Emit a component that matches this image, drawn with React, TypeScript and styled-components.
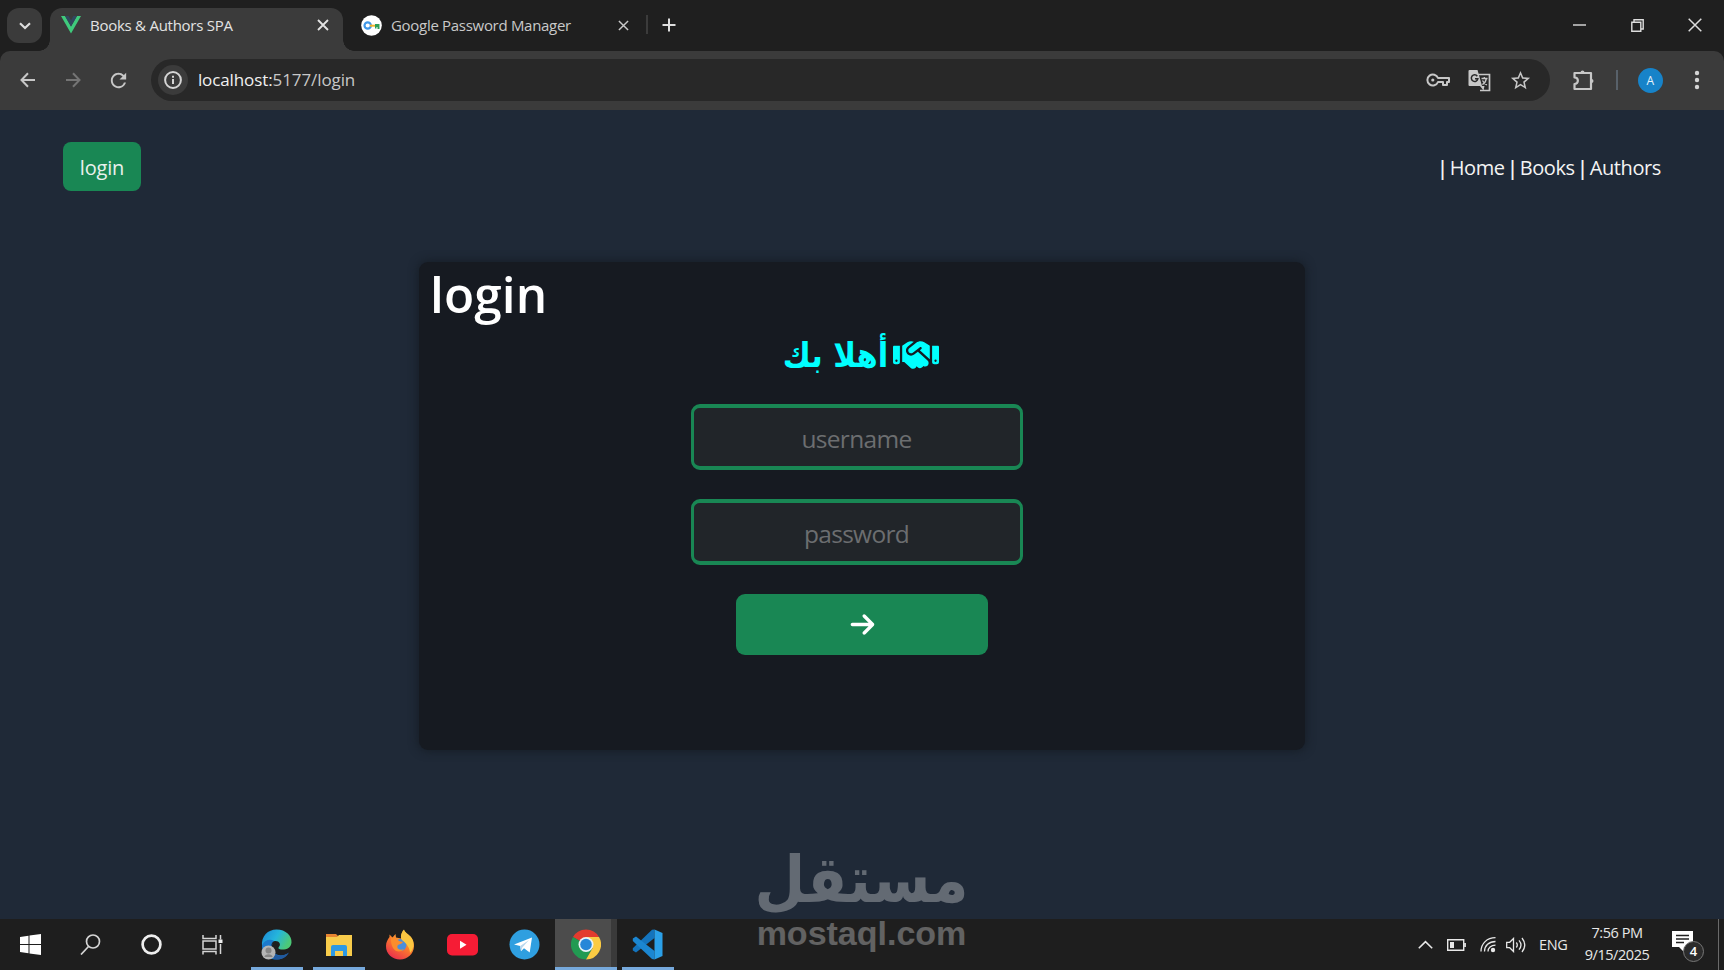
import React from 'react';
import styled, { createGlobalStyle } from 'styled-components';
import { FaArrowRight, FaHandshake } from 'react-icons/fa6';
import { MdStarBorder, MdRefresh } from 'react-icons/md';

const Global = createGlobalStyle`
  * { box-sizing: border-box; }
  body { margin: 0; background: #1f2937; font-family: "Open Sans", "Noto Sans", sans-serif; overflow: hidden; }
  svg { display: block; flex: none; }
`;

const Screen = styled.div`
  width: 1724px;
  height: 970px;
  display: flex;
  flex-direction: column;
  position: relative;
  overflow: hidden;
`;

/* ---------- Browser chrome ---------- */
const TabStrip = styled.div`
  height: 51px;
  flex: none;
  background: #1f1f1f;
  display: flex;
  align-items: flex-start;
  padding: 8px 0 0 7px;
`;
const TabSearch = styled.div`
  width: 35px;
  height: 35px;
  border-radius: 12px;
  background: #3b3b3b;
  display: grid;
  place-items: center;
`;
const Tab = styled.div<{ $active?: boolean; $width: number; $left: number }>`
  position: relative;
  width: ${p => p.$width}px;
  height: ${p => (p.$active ? 43 : 35)}px;
  margin-left: ${p => p.$left}px;
  padding: 0 ${p => (p.$active ? 14 : 6)}px ${p => (p.$active ? 9 : 1)}px 11px;
  display: flex;
  align-items: center;
  color: ${p => (p.$active ? '#e3e3e3' : '#c9c9c9')};
  background: ${p => (p.$active ? '#3b3b3b' : 'transparent')};
  border-radius: 12px 12px 0 0;
`;
const TabFlare = styled.span<{ $right?: boolean }>`
  position: absolute;
  bottom: 0;
  ${p => (p.$right ? 'right: -11px;' : 'left: -11px;')}
  width: 11px;
  height: 11px;
  background: radial-gradient(circle at ${p => (p.$right ? '100% 0' : '0 0')}, transparent 10.5px, #3b3b3b 11px);
`;
const TabTitle = styled.span<{ $spacing: number }>`
  flex: 1;
  margin-left: 9px;
  font-size: 15px;
  line-height: 20px;
  letter-spacing: ${p => p.$spacing}px;
  white-space: nowrap;
`;
const TabDivider = styled.div`
  width: 2px;
  height: 19px;
  margin: 7px 14px 0 11px;
  background: #3b3b3b;
`;
const NewTab = styled.div`
  margin-top: 10px;
`;
const WindowControls = styled.div`
  margin-left: auto;
  margin-top: -8px;
  height: 50px;
  display: flex;
`;
const WindowButton = styled.div`
  width: 58px;
  display: grid;
  place-items: center;
`;
const Toolbar = styled.div`
  height: 59px;
  flex: none;
  background: linear-gradient(#1f1f1f, #1f1f1f) top / 100% 12px no-repeat;
`;
const ToolbarInner = styled.div`
  height: 100%;
  background: #3b3b3b;
  border-radius: 10px 10px 0 0;
  display: flex;
  align-items: center;
  padding: 0 15px 1px 5px;
  color: #c7c7c7;
`;
const NavButton = styled.div<{ $dim?: boolean }>`
  width: 45.3px;
  display: grid;
  place-items: center;
  color: ${p => (p.$dim ? '#747474' : '#c7c7c7')};
`;
const AddressBar = styled.div`
  width: 1399px;
  height: 42px;
  margin-left: 10px;
  border-radius: 21px;
  background: #282828;
  display: flex;
  align-items: center;
  padding: 0 18px 0 7px;
`;
const SiteInfo = styled.div`
  width: 30px;
  height: 30px;
  border-radius: 50%;
  background: #3b3b3b;
  display: grid;
  place-items: center;
`;
const Url = styled.div`
  flex: 1;
  margin-left: 10px;
  font-size: 17px;
  line-height: 24px;
  letter-spacing: -0.1px;
  color: #c7c7c7;
  b { font-weight: 500; color: #f1f1f1; }
`;
const AddressActions = styled.div`
  display: flex;
  align-items: center;
  gap: 18px;
`;
const ToolbarActions = styled.div`
  flex: 1;
  display: flex;
  align-items: center;
  padding-left: 23px;
`;
const ToolbarDivider = styled.div`
  width: 2px;
  height: 20px;
  margin: 0 20px 0 22px;
  background: #58616a;
`;
const Avatar = styled.div`
  width: 25px;
  height: 25px;
  border-radius: 50%;
  background: #1783c9;
  color: #e6f3fb;
  font-size: 12px;
  line-height: 25px;
  text-align: center;
  margin-right: 31px;
`;

/* ---------- Page ---------- */
const Page = styled.main`
  height: 809px;
  flex: none;
  background: #1f2937;
  display: flex;
  flex-direction: column;
`;
const SiteNav = styled.nav`
  height: 152px;
  display: flex;
  align-items: flex-start;
  justify-content: space-between;
  padding: 32px 63px 0;
`;
const LoginLink = styled.a`
  width: 78px;
  height: 49px;
  border-radius: 8px;
  background: #198754;
  color: #e9f1ed;
  font-size: 20px;
  line-height: 51px;
  letter-spacing: -0.2px;
  text-align: center;
`;
const NavLinks = styled.div`
  font-size: 20px;
  line-height: 52px;
  letter-spacing: -0.4px;
  word-spacing: -2.6px;
  color: #f4f4f4;
  white-space: nowrap;
  b { font-weight: 600; }
`;
const Card = styled.section`
  width: 886px;
  height: 488px;
  margin-left: 419px;
  border-radius: 9px;
  background: #161a21;
  box-shadow: 0 0 10px 1px rgba(20, 26, 34, 0.8);
  display: flex;
  flex-direction: column;
  align-items: center;
`;
const CardTitle = styled.h1`
  align-self: flex-start;
  margin: -1px 0 0 11px;
  height: 69px;
  font-size: 49.5px;
  line-height: 67px;
  font-weight: 600;
  letter-spacing: 0.1px;
  color: #fff;
`;
const Welcome = styled.div`
  height: 50px;
  display: flex;
  align-items: center;
  gap: 5px;
  margin-right: 2px;
  color: #00ffff;
  font-family: "DejaVu Sans Condensed", "DejaVu Sans", sans-serif;
  font-stretch: semi-condensed;
  font-weight: 700;
  font-size: 34px;
  line-height: 50px;
  white-space: nowrap;
`;
const Field = styled.input`
  width: 332px;
  height: 66px;
  margin: 0 10px 29px 0;
  border: solid #198754;
  border-width: 4px 3px;
  border-radius: 9px;
  background: #212529;
  padding: 2px 0 0;
  text-align: center;
  font-family: "Open Sans", "Noto Sans", sans-serif;
  font-size: 24.5px;
  letter-spacing: -0.7px;
  outline: none;
  &::placeholder { color: #6c6e70; opacity: 1; }
`;
const Form = styled.form`
  margin: 24px 1px 0 0;
  display: flex;
  flex-direction: column;
  align-items: center;
`;
const Submit = styled.button`
  width: 252px;
  height: 61px;
  border: 0;
  border-radius: 9px;
  background: #198754;
  color: #fff;
  display: grid;
  place-items: center;
  padding: 0 0 0 1px;
`;

/* ---------- Watermark ---------- */
const Watermark = styled.div`
  position: absolute;
  left: 758px;
  top: 845px;
  width: 207px;
  height: 120px;
  opacity: 0.3;
  color: #fff;
  display: flex;
  flex-direction: column;
  align-items: center;
`;
const WatermarkArabic = styled.div`
  height: 70px;
  font: 700 65px/70px "DejaVu Sans Condensed", "DejaVu Sans", sans-serif;
  font-stretch: semi-condensed;
  white-space: nowrap;
`;
const WatermarkLatin = styled.div`
  font: 700 34px/36px "Liberation Sans", sans-serif;
  white-space: nowrap;
`;

/* ---------- Taskbar ---------- */
const Taskbar = styled.footer`
  height: 51px;
  flex: none;
  background: #1e1e1e;
  display: flex;
`;
const SystemSlot = styled.div`
  width: 60.6px;
  display: grid;
  place-items: center;
`;
const AppSlots = styled.div`
  display: flex;
  margin-left: 3.6px;
`;
const AppSlot = styled.div<{ $active?: boolean; $running?: boolean }>`
  position: relative;
  width: 61.8px;
  display: grid;
  place-items: center;
  background: ${p => (p.$active ? 'linear-gradient(90deg, #4c4c4c 56px, #3a3a3a 56px)' : 'none')};
  &::after {
    content: '';
    display: ${p => (p.$running ? 'block' : 'none')};
    position: absolute;
    bottom: 0;
    left: ${p => (p.$active ? 0 : 5)}px;
    right: ${p => (p.$active ? 0 : 5)}px;
    height: 3px;
    background: #76a9dc;
  }
`;
const Tray = styled.div`
  margin-left: auto;
  display: flex;
  align-items: center;
  color: #e8e8e8;
`;
const TrayIcon = styled.div<{ $gap: number }>`
  margin-right: ${p => p.$gap}px;
`;
const Language = styled.div`
  width: 29px;
  font-size: 14.5px;
  letter-spacing: -0.3px;
  margin-right: 12px;
`;
const Clock = styled.div`
  width: 74px;
  font-size: 14.5px;
  line-height: 22px;
  letter-spacing: -0.45px;
  text-align: center;
  white-space: nowrap;
  margin-right: 18px;
  padding-bottom: 1px;
`;
const Notifications = styled.div`
  position: relative;
  width: 32px;
  height: 31px;
  margin: 3px 14px 0 0;
`;
const Badge = styled.span`
  position: absolute;
  right: 0;
  bottom: 0;
  width: 21px;
  height: 21px;
  border-radius: 50%;
  border: 1.5px solid #777;
  background: #2b2b2b;
  color: #fff;
  font-size: 13px;
  font-weight: 600;
  line-height: 18px;
  text-align: center;
`;
const ShowDesktop = styled.div`
  width: 6px;
  height: 51px;
  border-left: 1px solid #6a6a6a;
`;

const Cross = ({ size, weight = 1.8 }: { size: number; weight?: number }) => (
  <svg width={size} height={size} viewBox="0 0 12 12" fill="none" stroke="currentColor" strokeWidth={weight}>
    <path d="M1 1l10 10M11 1L1 11" />
  </svg>
);

const BackArrow = ({ flip }: { flip?: boolean }) => (
  <svg width="16" height="16" viewBox="0 0 16 16" fill="none" stroke="currentColor" strokeWidth="2">
    <path d={flip ? 'M1 8h13M8 1.3L14.5 8 8 14.7' : 'M15 8H2M8 1.3L1.5 8 8 14.7'} />
  </svg>
);

const VueLogo = () => (
  <svg width="20" height="18" viewBox="0 0 20 18">
    <path d="M0 0h4l6 10.5L16 0h4L10 17.5z" fill="#3fca7c" />
    <path d="M4 0h3.6L10 4.2 12.4 0H16l-6 10.5z" fill="#31475e" />
  </svg>
);

const PasswordLogo = () => (
  <svg width="21" height="21" viewBox="0 0 21 21">
    <circle cx="10.5" cy="10.5" r="10.3" fill="#fff" />
    <circle cx="6.7" cy="10.5" r="3.2" fill="none" stroke="#3f97e8" strokeWidth="2.2" />
    <path d="M9 9.7h6v2H9z" fill="#f3b32b" />
    <path d="M14 9h4.5v5h-2v-2h-1v1.6H14z" fill="#2f9e57" />
  </svg>
);

const KeyIcon = () => (
  <svg width="24" height="14" viewBox="0 0 24 14" fill="none" stroke="currentColor" strokeWidth="2">
    <path d="M12 5h11v4h-2v3h-4V9h-5a5.500 5.500 0 1 1 0-4z" strokeLinejoin="round" />
    <circle cx="6.800" cy="7" r="1.600" fill="currentColor" stroke="none" />
  </svg>
);

const TranslateIcon = () => (
  <svg width="23" height="23" viewBox="0 0 23 23" fill="none">
    <path d="M10 5.500h11.500v16H12" stroke="currentColor" strokeWidth="1.700" />
    <path d="M1.500 1h8l4.500 16H1.500Q.5 17 .5 16V2q0-1 1-1z" fill="currentColor" />
    <path d="M9.300 7.200a3.300 3.300 0 1 0 .6 2.500H7" stroke="#282828" strokeWidth="1.500" />
    <path d="M12 17l3.500 4.500 1-4.500z" fill="currentColor" />
    <path d="M13.500 9.500h6M16.300 8v1.500M18.300 10q-1 4-4 5.500M14.500 11.500q1.500 3 4.500 4.500" stroke="currentColor" strokeWidth="1.300" />
  </svg>
);

const PuzzleIcon = () => (
  <svg width="21" height="21" viewBox="0 0 21 21" fill="none" stroke="currentColor" strokeWidth="2.200" strokeLinejoin="round">
    <path d="M1.500 3H18v16H1.500v-5c4.500 0 4.500-6.500 0-6.500z" />
    <path d="M7.500 2.500a2 2 0 0 1 4 0zM18.500 9v4a2 2 0 0 0 0-4z" fill="currentColor" stroke="none" />
  </svg>
);

const EdgeLogo = () => (
  <svg width="31" height="31" viewBox="0 0 31 31">
    <defs>
      <linearGradient id="edgeTop" x1="0" x2="1" y1="0" y2=".4">
        <stop offset="0" stopColor="#1c86d6" />
        <stop offset=".55" stopColor="#25b6dc" />
        <stop offset="1" stopColor="#4cc977" />
      </linearGradient>
    </defs>
    <path d="M1 17C0 7 7 .5 15.5.5 25 .5 31 7 30.5 13.5 30 19 25 21 20 20.5c-3-.4-3-1.600-1.800-3 1.800-2 .3-5.500-3.700-5.500C7 12 1 17 1 17z" fill="url(#edgeTop)" />
    <path d="M1 16.500C3 11 9 9.500 13 12c-3 2-3.500 6-1.500 9.500 2.500 5 9 6.500 15.500 3C23 30 17 31.500 11.500 30 5 28.500.5 22 1 16.500z" fill="#1b79cc" />
    <path d="M12 14c-2.500 4-1 10 4 12 4 1.500 8 0 12-2.500C25 29 19 31.500 13.500 30 9 28 7.500 19 12 14z" fill="#215a9f" />
    <circle cx="7.500" cy="23.500" r="7" fill="#b5b5b5" />
    <circle cx="7.500" cy="21.500" r="3" fill="#858585" />
    <path d="M3.300 28a4.300 3.500 0 0 1 8.400 0z" fill="#858585" />
  </svg>
);

const FolderLogo = () => (
  <svg width="28" height="24" viewBox="0 0 28 24">
    <path d="M1 1h10l2 2v5H1z" fill="#e78532" />
    <path d="M1 4h11l2-2h13v21H1z" fill="#f8cc4b" />
    <path d="M6 23V14q0-2 2-2h12q2 0 2 2v9h-4v-5h-8v5z" fill="#2d99e4" />
  </svg>
);

const FirefoxLogo = () => (
  <svg width="30" height="31" viewBox="0 0 30 31">
    <defs>
      <linearGradient id="fox" x1=".8" x2=".2" y1="0" y2="1">
        <stop offset="0" stopColor="#ffd848" />
        <stop offset=".5" stopColor="#fb7b2c" />
        <stop offset="1" stopColor="#e82850" />
      </linearGradient>
    </defs>
    <path d="M19 .5c1 4 7 5 9 11 1 2 1 5 1 6C28.500 25 22.500 30.500 15 30.500S.8 25 1 17c0-4 1.500-6 3.500-9V5.500l3 3 3-3.500.5 3.500 5 1C16 5 17 2 19 .5z" fill="url(#fox)" />
    <circle cx="15.500" cy="16" r="6" fill="#4b8edc" />
    <path d="M6 9c3-1 6 0 8 3l4 1c-1 2-4 2-5 3-2 3 1 6 6 4-2 3-8 4-11-1-2-3-2-7-2-10z" fill="#fb8d2d" />
    <path d="M19 1c1 4 7 5 9 11 1 5 0 9-3 12 0-5-3-9-8-13-2-3-1-7 2-10z" fill="#fbc641" />
  </svg>
);

const YoutubeLogo = () => (
  <svg width="31" height="22" viewBox="0 0 31 22">
    <rect width="31" height="21.500" rx="5" fill="#f61c35" />
    <path d="M13 6.800l6.500 4-6.500 4z" fill="#fff" />
  </svg>
);

const TelegramLogo = () => (
  <svg width="31" height="31" viewBox="0 0 31 31">
    <circle cx="15.500" cy="15.500" r="15" fill="#2f9fe0" />
    <path d="M5 15.500L23 8.500l-2.300 15-5.700-4.200-3 3-.8-5.300z" fill="#fff" />
    <path d="M11.200 17L20 11l-6.700 7.500-1.300 3.800z" fill="#b9d8ee" />
  </svg>
);

const ChromeLogo = () => (
  <svg width="30" height="31" viewBox="0 0 30 30">
    <path d="M15 15L2 7.500a15 15 0 0 1 26 0H15z" fill="#e33b2e" />
    <path d="M15 15L2 7.500A15 15 0 0 0 15 30l6.500-11.300z" fill="#229a52" />
    <path d="M15 7.500h13A15 15 0 0 1 15 30l6.500-11.300z" fill="#fbcb43" />
    <circle cx="15" cy="15" r="7.500" fill="#e9f2f8" />
    <circle cx="15" cy="15" r="5.800" fill="#2787d8" />
  </svg>
);

const CodeLogo = () => (
  <svg width="31" height="31" viewBox="0 0 31 31">
    <path d="M22.500.5V9L4 23.500 .8 21.500v-2.300L20 .8z" fill="#1474bd" />
    <path d="M.8 9.500L4 7.500 22.500 22v8.500L20 30 .8 12z" fill="#1b86d1" />
    <path d="M22.500.5L30.500 4v23l-8 3.500z" fill="#2ba0e8" />
  </svg>
);

export default function App() {
  return (
    <>
      <Global />
      <Screen>
        <TabStrip>
          <TabSearch>
            <svg width="12" height="8" viewBox="0 0 12 8" fill="none" stroke="#dedede" strokeWidth="2.200"><path d="M1 1.300l5 4.700 5-4.700" /></svg>
          </TabSearch>
          <Tab $active $width={293} $left={8}>
            <TabFlare />
            <VueLogo />
            <TabTitle $spacing={-0.26}>Books &amp; Authors SPA</TabTitle>
            <Cross size={12} />
            <TabFlare $right />
          </Tab>
          <Tab $width={285} $left={7}>
            <PasswordLogo />
            <TabTitle $spacing={-0.3}>Google Password Manager</TabTitle>
            <Cross size={11} weight={1.600} />
          </Tab>
          <TabDivider />
          <NewTab>
            <svg width="14" height="14" viewBox="0 0 14 14" stroke="#dedede" strokeWidth="2"><path d="M7 .5v13M.5 7h13" /></svg>
          </NewTab>
          <WindowControls>
            <WindowButton>
              <svg width="13" height="2" viewBox="0 0 13 2"><path d="M0 .3h13v1.400H0z" fill="#ddd" /></svg>
            </WindowButton>
            <WindowButton>
              <svg width="13" height="13" viewBox="0 0 13 13" fill="none" stroke="#ddd" strokeWidth="1.400"><path d="M.8 3.300h9v9h-9zM3 3V.8h9.200V10H10" /></svg>
            </WindowButton>
            <WindowButton>
              <svg width="14" height="14" viewBox="0 0 14 14" stroke="#ddd" strokeWidth="1.500"><path d="M.7.7l12.600 12.600M13.300.7L.7 13.300" /></svg>
            </WindowButton>
          </WindowControls>
        </TabStrip>

        <Toolbar>
          <ToolbarInner>
            <NavButton><BackArrow /></NavButton>
            <NavButton $dim><BackArrow flip /></NavButton>
            <NavButton><MdRefresh size={23} /></NavButton>
            <AddressBar>
              <SiteInfo>
                <svg width="18" height="18" viewBox="0 0 18 18" fill="none" stroke="#d5d5d5" strokeWidth="2">
                  <circle cx="9" cy="9" r="7.900" />
                  <path d="M9 8v5M9 4.800v1.900" />
                </svg>
              </SiteInfo>
              <Url><b>localhost:</b>5177/login</Url>
              <AddressActions>
                <KeyIcon />
                <TranslateIcon />
                <MdStarBorder size={23} />
              </AddressActions>
            </AddressBar>
            <ToolbarActions>
              <PuzzleIcon />
              <ToolbarDivider />
              <Avatar>A</Avatar>
              <svg width="6" height="20" viewBox="0 0 6 20" fill="#d5d5d5">
                <circle cx="3" cy="3" r="2.200" /><circle cx="3" cy="10" r="2.200" /><circle cx="3" cy="17" r="2.200" />
              </svg>
            </ToolbarActions>
          </ToolbarInner>
        </Toolbar>

        <Page>
          <SiteNav>
            <LoginLink>login</LoginLink>
            <NavLinks><b>|</b> Home <b>|</b> Books <b>|</b> Authors</NavLinks>
          </SiteNav>
          <Card>
            <CardTitle>login</CardTitle>
            <Welcome dir="rtl">
              <FaHandshake size={46} />
              <span>أهلا بك</span>
            </Welcome>
            <Form>
              <Field placeholder="username" />
              <Field placeholder="password" type="password" />
              <Submit type="button"><FaArrowRight size={27} /></Submit>
            </Form>
          </Card>
        </Page>

        <Taskbar>
          <SystemSlot>
            <svg width="21" height="21" viewBox="0 0 21 21" fill="#fff"><path d="M0 3l8.500-1.300V10H0zM9.500 1.500L21 0v10H9.500zM0 11h8.500v8.300L0 18zM9.500 11H21v10L9.500 19.500z" /></svg>
          </SystemSlot>
          <SystemSlot>
            <svg width="21" height="21" viewBox="0 0 21 21" fill="none" stroke="#d5d5d5" strokeWidth="1.700"><circle cx="13" cy="7.500" r="6.500" /><path d="M8.500 12.500L1 20.500" /></svg>
          </SystemSlot>
          <SystemSlot>
            <svg width="21" height="21" viewBox="0 0 21 21" fill="none" stroke="#eee" strokeWidth="2.700"><circle cx="10.500" cy="10.500" r="8.900" /></svg>
          </SystemSlot>
          <SystemSlot>
            <svg width="21" height="21" viewBox="0 0 21 21" fill="none" stroke="#d5d5d5" strokeWidth="1.500"><path d="M1 1v3.500h13V1M1 7h13v8H1zM1 20.500v-3h13v3M18.500 1v4.500M18.500 10v10" /><path d="M16.500 5.500h4v3.500h-4z" fill="#eee" stroke="none" /></svg>
          </SystemSlot>
          <AppSlots>
            <AppSlot $running><EdgeLogo /></AppSlot>
            <AppSlot $running><FolderLogo /></AppSlot>
            <AppSlot><FirefoxLogo /></AppSlot>
            <AppSlot><YoutubeLogo /></AppSlot>
            <AppSlot><TelegramLogo /></AppSlot>
            <AppSlot $active $running><ChromeLogo /></AppSlot>
            <AppSlot $running><CodeLogo /></AppSlot>
          </AppSlots>
          <Tray>
            <TrayIcon $gap={14}>
              <svg width="15" height="9" viewBox="0 0 15 9" fill="none" stroke="currentColor" strokeWidth="1.600"><path d="M.8 8.200l6.700-6.500 6.700 6.500" /></svg>
            </TrayIcon>
            <TrayIcon $gap={14}>
              <svg width="19" height="12" viewBox="0 0 19 12" fill="none" stroke="currentColor" strokeWidth="1.400"><path d="M.7.700h16v10.600H.7zM18.200 4v4" /><path d="M3 3h4v6H3z" fill="currentColor" stroke="none" /></svg>
            </TrayIcon>
            <TrayIcon $gap={10}>
              <svg width="16" height="17" viewBox="0 0 16 17" fill="none" stroke="currentColor" strokeWidth="1.300"><path d="M1 15.500C1 7.500 7 1.700 15.500 1.700M4.500 15.500C4.500 9.500 9 5.500 15.500 5.500M8 15.500c0-3.500 3-6.300 7.500-6.300" /><circle cx="13" cy="14" r="2.200" fill="currentColor" stroke="none" /></svg>
            </TrayIcon>
            <TrayIcon $gap={13}>
              <svg width="20" height="16" viewBox="0 0 20 16" fill="none" stroke="currentColor" strokeWidth="1.300"><path d="M.7 5.300h3L7.500 1.500v13L3.700 10.700h-3zM10.300 5.500q2 2.500 0 5M13 3.300q4 4.700 0 9.400M16 1q5.500 7 0 14" /></svg>
            </TrayIcon>
            <Language>ENG</Language>
            <Clock>7:56 PM<br />9/15/2025</Clock>
            <Notifications>
              <svg width="21" height="21" viewBox="0 0 21 21"><path d="M0 0h21v16h-9v5l-5-5H0z" fill="#fff" /><path d="M4 4.500h13M4 8h13M4 11.500h8" stroke="#222" strokeWidth="1.300" /></svg>
              <Badge>4</Badge>
            </Notifications>
            <ShowDesktop />
          </Tray>
        </Taskbar>

        <Watermark>
          <WatermarkArabic lang="ar">مستقل</WatermarkArabic>
          <WatermarkLatin>mostaql.com</WatermarkLatin>
        </Watermark>
      </Screen>
    </>
  );
}
